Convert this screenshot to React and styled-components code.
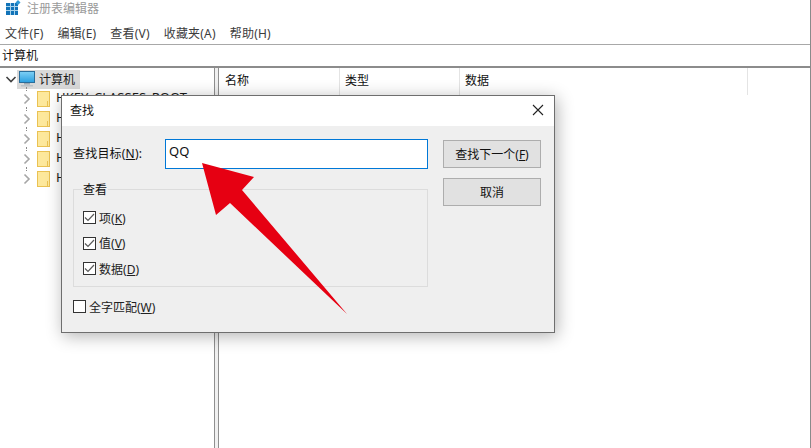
import React from 'react';
import styled, { createGlobalStyle } from 'styled-components';

const GlobalStyle = createGlobalStyle`
  html, body {
    margin: 0;
    padding: 0;
    background: #ffffff;
  }
  body {
    font-family: "Noto Sans", "Noto Sans CJK SC", sans-serif;
    font-size: 12px;
    color: #1a1a1a;
  }
`;

const Window = styled.div`
  position: relative;
  width: 811px;
  height: 448px;
  overflow: hidden;
  background: #fff;
  display: flex;
  flex-direction: column;
  border-right: 1px solid #8a8a8a;
  box-sizing: border-box;
`;

const TitleBar = styled.div`
  height: 22px;
  display: flex;
  align-items: center;
  gap: 6px;
  padding: 0 0 7px 6px;
  box-sizing: border-box;
  color: #9a9a9a;
  font-size: 12px;
`;

const MenuBar = styled.div`
  height: 22px;
  display: flex;
  align-items: center;
  gap: 14px;
  padding-left: 5px;
  color: #3c3c3c;
  font-size: 12px;
  letter-spacing: 0.2px;
`;

const AddressBar = styled.div`
  height: 22px;
  padding: 0 0 2px 2px;
  display: flex;
  align-items: center;
  box-sizing: border-box;
  border-top: 1px solid #a8a8a8;
  font-size: 12px;
  color: #111;
`;

const Panes = styled.div`
  flex: 1;
  display: flex;
  border-top: 2px solid #8c8c8c;
  min-height: 0;
`;

const TreePane = styled.div`
  width: 214px;
  padding-top: 1px;
  box-sizing: border-box;
`;

const Splitter = styled.div`
  width: 3px;
  background: #f0f0f0;
  border-left: 1px solid #8f8f8f;
  border-right: 1px solid #8f8f8f;
`;

const ListPane = styled.div`
  flex: 1;
  padding-left: 1px;
`;

const ListHeader = styled.div`
  height: 27px;
  display: flex;
  background: #fff;
`;

const HeaderCell = styled.div`
  width: ${(p) => p.$w}px;
  box-sizing: border-box;
  padding: 3px 0 0 5px;
  border-right: 1px solid #e4e4e4;
  font-size: 12px;
  color: #111;
`;

const TreeRow = styled.div`
  height: 20px;
  display: flex;
  align-items: center;
  white-space: nowrap;
  padding-left: ${(p) => p.$indent}px;
`;

const Toggle = styled.span`
  position: relative;
  width: 12px;
  height: 12px;
  display: flex;
  align-items: center;
  justify-content: center;
  margin-right: ${(p) => p.$gap}px;
`;

const TreeDots = styled.span`
  position: absolute;
  left: 5px;
  top: -6px;
  width: 1px;
  height: 4px;
  border-left: 1px dotted #8a8a8a;
`;

const RootLabel = styled.span`
  display: flex;
  align-items: center;
  gap: 4px;
  height: 19px;
  width: 63px;
  padding-left: 2px;
  box-sizing: border-box;
  background: #d9d9d9;
`;

const KeyLabel = styled.span`
  margin: 0 0 4px 6px;
  font-size: 13px;
`;

const Dialog = styled.div`
  position: absolute;
  left: 61px;
  top: 95px;
  width: 494px;
  height: 238px;
  box-sizing: border-box;
  background: #efefef;
  border: 1px solid #6e6e6e;
  box-shadow: 2px 3px 16px rgba(0, 0, 0, 0.3);
  display: flex;
  flex-direction: column;
`;

const DialogTitle = styled.div`
  height: 30px;
  flex: none;
  box-sizing: border-box;
  background: #fff;
  display: flex;
  align-items: center;
  justify-content: space-between;
  padding: 0 10px 2px 8px;
  font-size: 12px;
  color: #111;
`;

const DialogBody = styled.div`
  flex: 1;
  display: flex;
  gap: 15px;
  padding: 13px 0 0 11px;
`;

const MainColumn = styled.div`
  width: 355px;
  display: flex;
  flex-direction: column;
`;

const SearchRow = styled.div`
  display: flex;
  align-items: center;
`;

const FieldLabel = styled.label`
  width: 92px;
  font-size: 12px;
  color: #111;
  padding-bottom: 3px;
  letter-spacing: 0.2px;
`;

const SearchInput = styled.div`
  width: 263px;
  height: 30px;
  box-sizing: border-box;
  background: #fff;
  border: 1px solid #0078d7;
  padding: 2px 3px;
  font-size: 13px;
  line-height: 18px;
  color: #111;
`;

const Group = styled.fieldset`
  margin: 13px 0 0;
  padding: 8px 0 0 9px;
  height: 105px;
  box-sizing: border-box;
  border: 1px solid #dcdcdc;
  display: flex;
  flex-direction: column;
`;

const GroupLegend = styled.legend`
  margin-left: -1px;
  padding: 0 1px;
  font-size: 12px;
  line-height: 15px;
  color: #111;
`;

const CheckRow = styled.div`
  height: 25.5px;
  display: flex;
  align-items: center;
  font-size: 12px;
  color: #222;
`;

const CheckBox = styled.span`
  width: 11px;
  height: 11px;
  display: flex;
  align-items: center;
  justify-content: center;
  background: #fff;
  border: 1px solid #333;
  flex: none;
  margin-right: 3px;
`;

const MatchRow = styled(CheckRow)`
  margin-top: 7px;
`;

const Key = styled.span`
  text-decoration: underline;
  text-underline-offset: 1px;
`;

const ButtonColumn = styled.div`
  width: 98px;
  display: flex;
  flex-direction: column;
  gap: 10px;
  padding-top: 1px;
`;

const Button = styled.div`
  height: 28px;
  box-sizing: border-box;
  background: #e1e1e1;
  border: 1px solid #adadad;
  display: flex;
  align-items: center;
  justify-content: center;
  font-size: 12px;
  color: #111;
`;

const ArrowLayer = styled.svg`
  position: absolute;
  left: 0;
  top: 0;
  pointer-events: none;
`;

const Chevron = ({ down }) => (
  <svg width="12" height="12" viewBox="0 0 12 12">
    <path
      d={down ? 'M1.5 4 L6 8.5 L10.5 4' : 'M3.5 1.5 L8 6 L3.5 10.5'}
      fill="none"
      stroke={down ? '#404040' : '#a6a6a6'}
      strokeWidth="1.6"
    />
  </svg>
);

const RegIcon = () => (
  <svg width="15" height="15" viewBox="0 0 15 15" style={{ flex: 'none' }}>
    <rect x="0" y="3" width="12" height="12" fill="#1273b8" />
    <path d="M4.5 3v12M8.5 3v12M0 6.5h12M0 10.5h12" stroke="#a9d4ec" strokeWidth="1" />
    <path d="M12 0l2.5 2.5L12 5 9.5 2.5z" fill="#2e9ad6" />
  </svg>
);

const MonitorIcon = () => (
  <svg width="16" height="16" viewBox="0 0 16 16" style={{ flex: 'none' }}>
    <defs>
      <linearGradient id="screen" x1="0" y1="0" x2="0" y2="1">
        <stop offset="0" stopColor="#7fd0f5" />
        <stop offset="1" stopColor="#2a9fdf" />
      </linearGradient>
    </defs>
    <rect x="0.5" y="0.5" width="15" height="11" fill="url(#screen)" stroke="#2a6d9a" />
    <rect x="5" y="12" width="6" height="1.5" fill="#9aa7b0" />
    <rect x="2" y="14" width="12" height="1.5" fill="#b9c2c8" />
  </svg>
);

const FolderIcon = () => (
  <svg width="13" height="16" viewBox="0 0 13 16" style={{ flex: 'none' }}>
    <rect x="0.5" y="0.5" width="12" height="15" fill="#fde89c" stroke="#eac253" />
    <path d="M10.5 10v5.5" stroke="#eac253" />
  </svg>
);

const TickIcon = () => (
  <svg width="11" height="11" viewBox="0 0 11 11">
    <path d="M1 5.5 L4 8.5 L10 2" fill="none" stroke="#5a5a5a" strokeWidth="1.2" />
  </svg>
);

const keys = [
  'HKEY_CLASSES_ROOT',
  'HKEY_CURRENT_USER',
  'HKEY_LOCAL_MACHINE',
  'HKEY_USERS',
  'HKEY_CURRENT_CONFIG',
];

const options = [
  ['项', 'K'],
  ['值', 'V'],
  ['数据', 'D'],
];

const menus = ['文件(F)', '编辑(E)', '查看(V)', '收藏夹(A)', '帮助(H)'];

export default function App() {
  return (
    <Window>
      <GlobalStyle />
      <TitleBar>
        <RegIcon />
        <span>注册表编辑器</span>
      </TitleBar>
      <MenuBar>
        {menus.map((m) => (
          <span key={m}>{m}</span>
        ))}
      </MenuBar>
      <AddressBar>计算机</AddressBar>
      <Panes>
        <TreePane>
          <TreeRow $indent={5}>
            <Toggle $gap={0}>
              <Chevron down />
            </Toggle>
            <RootLabel>
              <MonitorIcon />
              <span>计算机</span>
            </RootLabel>
          </TreeRow>
          {keys.map((k) => (
            <TreeRow key={k} $indent={21}>
              <Toggle $gap={4}>
                <TreeDots />
                <Chevron />
              </Toggle>
              <FolderIcon />
              <KeyLabel>{k}</KeyLabel>
            </TreeRow>
          ))}
        </TreePane>
        <Splitter />
        <ListPane>
          <ListHeader>
            <HeaderCell $w={120}>名称</HeaderCell>
            <HeaderCell $w={120}>类型</HeaderCell>
            <HeaderCell $w={288}>数据</HeaderCell>
          </ListHeader>
        </ListPane>
      </Panes>

      <Dialog>
        <DialogTitle>
          <span>查找</span>
          <svg width="12" height="12" viewBox="0 0 12 12">
            <path d="M1 1 L11 11 M11 1 L1 11" stroke="#222" strokeWidth="1.1" />
          </svg>
        </DialogTitle>
        <DialogBody>
          <MainColumn>
            <SearchRow>
              <FieldLabel>
                查找目标(<Key>N</Key>):
              </FieldLabel>
              <SearchInput>QQ</SearchInput>
            </SearchRow>
            <Group>
              <GroupLegend>查看</GroupLegend>
              {options.map(([label, key]) => (
                <CheckRow key={key}>
                  <CheckBox>
                    <TickIcon />
                  </CheckBox>
                  <span>
                    {label}(<Key>{key}</Key>)
                  </span>
                </CheckRow>
              ))}
            </Group>
            <MatchRow>
              <CheckBox />
              <span>
                全字匹配(<Key>W</Key>)
              </span>
            </MatchRow>
          </MainColumn>
          <ButtonColumn>
            <Button>
              <span>
                查找下一个(<Key>F</Key>)
              </span>
            </Button>
            <Button>取消</Button>
          </ButtonColumn>
        </DialogBody>
      </Dialog>

      <ArrowLayer width="811" height="448" viewBox="0 0 811 448">
        <polygon
          points="202,163 254,177 242,190 347,314 230,203 216,215"
          fill="#e60012"
        />
      </ArrowLayer>
    </Window>
  );
}
